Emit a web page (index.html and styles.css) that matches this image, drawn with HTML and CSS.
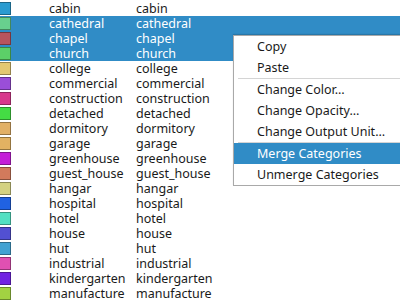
FILE: index.html
```html
<!DOCTYPE html>
<html>
<head>
<meta charset="utf-8">
<link rel="stylesheet" href="styles.css">
</head>
<body>
<div class="table">
  <div class="row"><span class="sw" style="background:#2a9bd0"></span><span class="c1">cabin</span><span class="c2">cabin</span></div>
  <div class="row sel"><span class="sw" style="background:#68d08e"></span><span class="c1">cathedral</span><span class="c2">cathedral</span></div>
  <div class="row sel"><span class="sw" style="background:#b8545e"></span><span class="c1">chapel</span><span class="c2">chapel</span></div>
  <div class="row sel"><span class="sw" style="background:#5ccf68"></span><span class="c1">church</span><span class="c2">church</span></div>
  <div class="row"><span class="sw" style="background:#e2c872"></span><span class="c1">college</span><span class="c2">college</span></div>
  <div class="row"><span class="sw" style="background:#9a4ed8"></span><span class="c1">commercial</span><span class="c2">commercial</span></div>
  <div class="row"><span class="sw" style="background:#d8388c"></span><span class="c1">construction</span><span class="c2">construction</span></div>
  <div class="row"><span class="sw" style="background:#44dc44"></span><span class="c1">detached</span><span class="c2">detached</span></div>
  <div class="row"><span class="sw" style="background:#e2b066"></span><span class="c1">dormitory</span><span class="c2">dormitory</span></div>
  <div class="row"><span class="sw" style="background:#e2b262"></span><span class="c1">garage</span><span class="c2">garage</span></div>
  <div class="row"><span class="sw" style="background:#c41ed8"></span><span class="c1">greenhouse</span><span class="c2">greenhouse</span></div>
  <div class="row"><span class="sw" style="background:#d27a5c"></span><span class="c1">guest_house</span><span class="c2">guest_house</span></div>
  <div class="row"><span class="sw" style="background:#d4d282"></span><span class="c1">hangar</span><span class="c2">hangar</span></div>
  <div class="row"><span class="sw" style="background:#2062e2"></span><span class="c1">hospital</span><span class="c2">hospital</span></div>
  <div class="row"><span class="sw" style="background:#52e0c2"></span><span class="c1">hotel</span><span class="c2">hotel</span></div>
  <div class="row"><span class="sw" style="background:#5250d2"></span><span class="c1">house</span><span class="c2">house</span></div>
  <div class="row"><span class="sw" style="background:#42a2d2"></span><span class="c1">hut</span><span class="c2">hut</span></div>
  <div class="row"><span class="sw" style="background:#e050b2"></span><span class="c1">industrial</span><span class="c2">industrial</span></div>
  <div class="row"><span class="sw" style="background:#7022e2"></span><span class="c1">kindergarten</span><span class="c2">kindergarten</span></div>
  <div class="row"><span class="sw" style="background:#a2d242"></span><span class="c1">manufacture</span><span class="c2">manufacture</span></div>
</div>
<div class="menu">
  <div class="item">Copy</div>
  <div class="item">Paste</div>
  <div class="sep"></div>
  <div class="item">Change Color…</div>
  <div class="item">Change Opacity…</div>
  <div class="item">Change Output Unit…</div>
  <div class="sep"></div>
  <div class="item active">Merge Categories</div>
  <div class="item">Unmerge Categories</div>
</div>
</body>
</html>
```
FILE: styles.css
```css
html, body {
  margin: 0;
  padding: 0;
  background: #ffffff;
  width: 400px;
  height: 300px;
  overflow: hidden;
  font-family: "Noto Sans", "DejaVu Sans", sans-serif;
  font-size: 12.5px;
  color: #1a1a1a;
}
.table {
  padding-top: 1px;
  display: flex;
  flex-direction: column;
}
.row {
  display: flex;
  align-items: center;
  height: 15px;
  line-height: 15px;
  white-space: nowrap;
}
.row.sel {
  background: #308cc6;
  color: #ffffff;
}
.sw {
  flex: none;
  width: 10px;
  height: 11px;
  border: 1px solid rgba(0,0,0,0.35);
  border-left: none;
  margin-right: 38px;
}
.c1 {
  width: 87px;
  flex: none;
}
.c2 {
  flex: none;
}
.menu {
  position: absolute;
  left: 233px;
  right: 0;
  top: 35px;
  background: #ffffff;
  border: 1px solid #a9a9a9;
  border-right: none;
  box-shadow: 0 -1px 1px rgba(0,0,0,0.15);
  color: #1a1a1a;
  font-size: 12.5px;
}
.item {
  height: 21px;
  line-height: 21px;
  padding-left: 23px;
  white-space: nowrap;
}
.item.active {
  background: #308cc6;
  color: #ffffff;
}
.sep {
  height: 1px;
  background: #d4d4d4;
  margin-left: 4px;
}
```
